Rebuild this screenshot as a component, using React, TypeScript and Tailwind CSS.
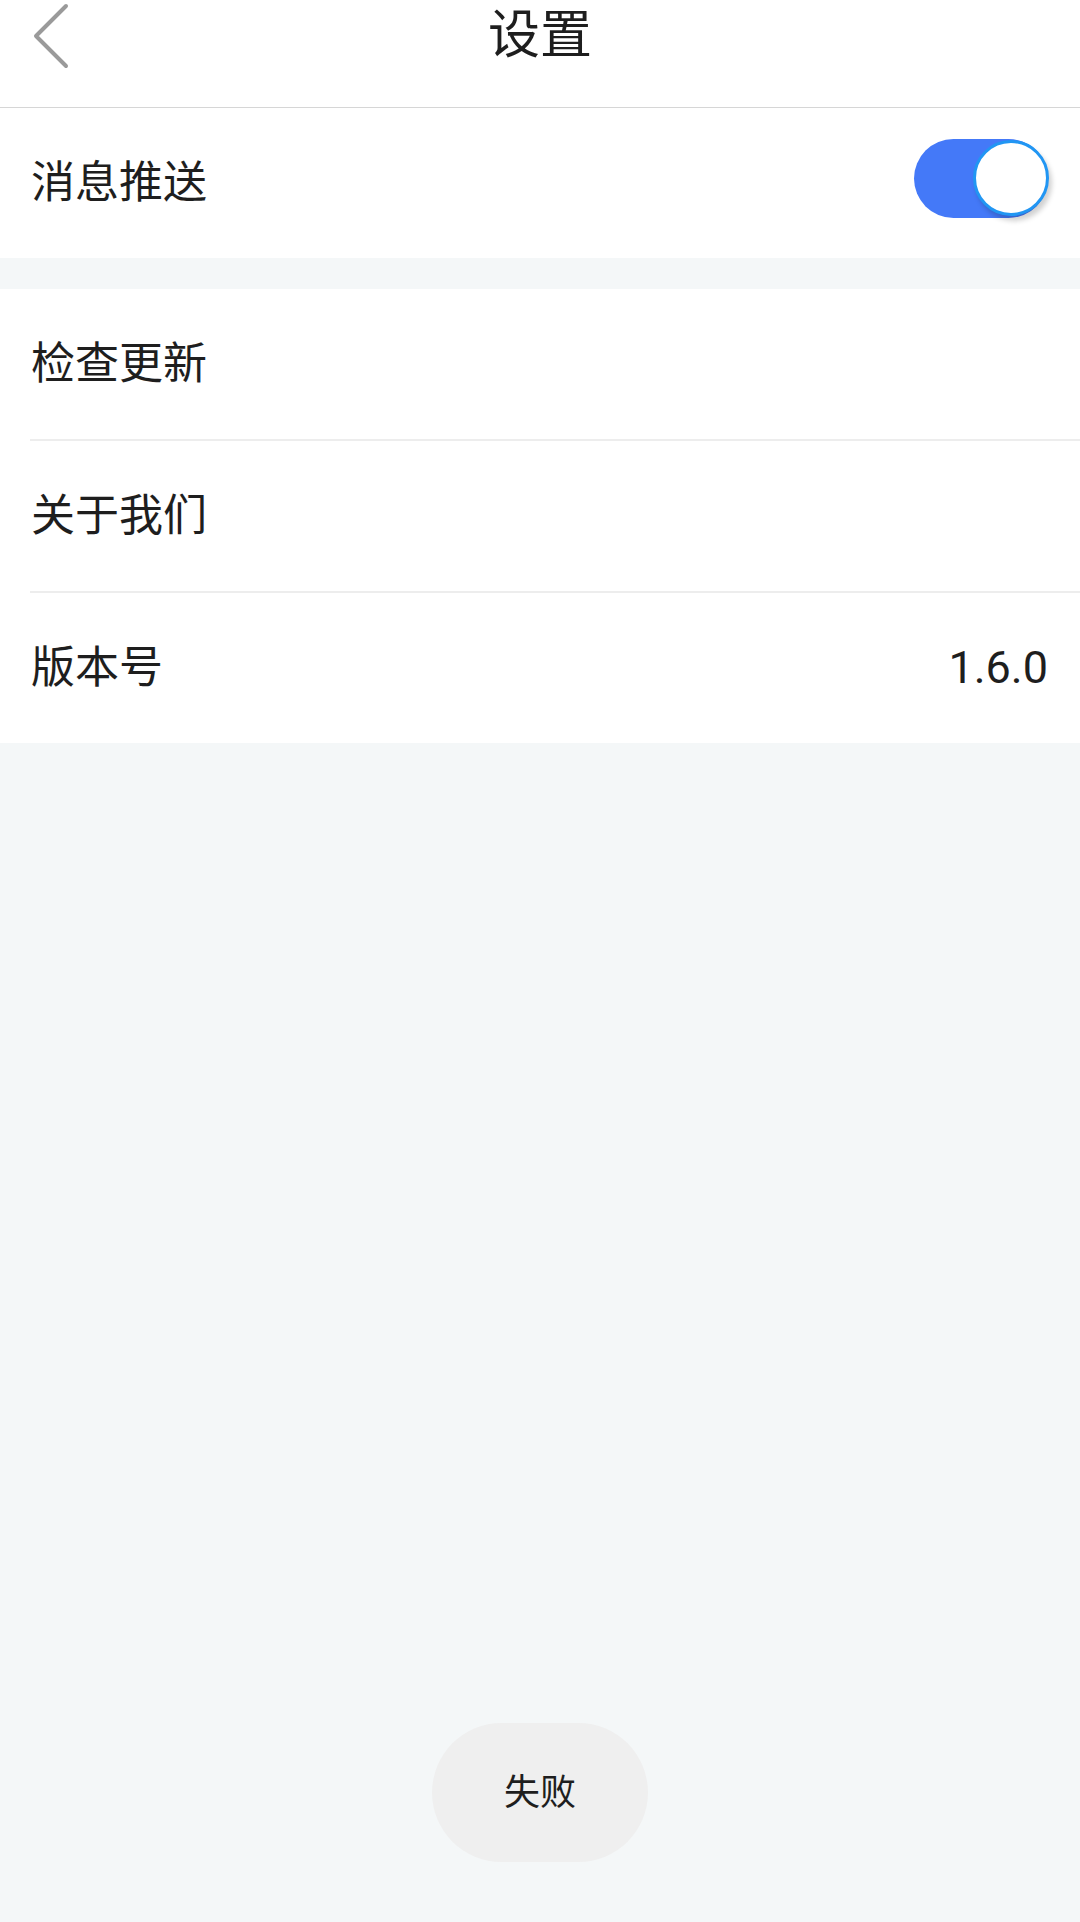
import React from "react";

const font = { fontFamily: '"Noto Sans CJK SC", "Noto Sans", sans-serif' };

function Row({ label, right, border }: { label: string; right?: React.ReactNode; border?: boolean }) {
  return (
    <div className="bg-white">
      <div className="h-[150px] flex items-center justify-between pl-[31px] pr-[32px]">
        <span className="text-[44px] leading-[1.2] text-[#1e1e1e] mb-[8px]">{label}</span>
        {right}
      </div>
      {border && <div className="ml-[30px] h-[2px] bg-[#ededed]" />}
    </div>
  );
}

function Toggle() {
  return (
    <div className="relative w-[134px] h-[79px] rounded-full bg-[#4479f8] mb-[9px]">
      <div className="absolute right-[-1px] top-[1px] w-[76px] h-[76px] rounded-full bg-white border-[3px] border-[#2196f3] shadow-[3px_5px_5px_rgba(0,0,0,0.18)]" />
    </div>
  );
}

export default function App() {
  return (
    <div className="relative w-[1080px] min-h-[1922px] bg-[#f4f7f8]" style={font}>
      <div className="relative h-[108px] bg-white border-b border-[#d6d6d6]">
        <div className="h-[70px] flex items-center justify-center">
          <span className="text-[52px] leading-[1.15] text-[#1e1e1e] mb-[8px]">设置</span>
        </div>
        <svg className="absolute left-[30px] top-[3px]" width="42" height="66" viewBox="0 0 42 66">
          <polyline points="36,3 6,33 36,63" fill="none" stroke="#9a9a9a" strokeWidth="4" strokeLinecap="round" strokeLinejoin="round" />
        </svg>
      </div>
      <Row label="消息推送" right={<Toggle />} />
      <div className="h-[31px]" />
      <Row label="检查更新" border />
      <Row label="关于我们" border />
      <Row
        label="版本号"
        right={<span className="text-[45px] leading-[1.2] text-[#1e1e1e]" style={{ fontFamily: "Roboto, sans-serif" }}>1.6.0</span>}
      />
      <div className="absolute left-[432px] top-[1723px] w-[216px] h-[139px] rounded-full bg-[#efefef] flex items-center justify-center">
        <span className="text-[36px] leading-[1.2] text-[#1e1e1e] mb-[6px]">失败</span>
      </div>
    </div>
  );
}
